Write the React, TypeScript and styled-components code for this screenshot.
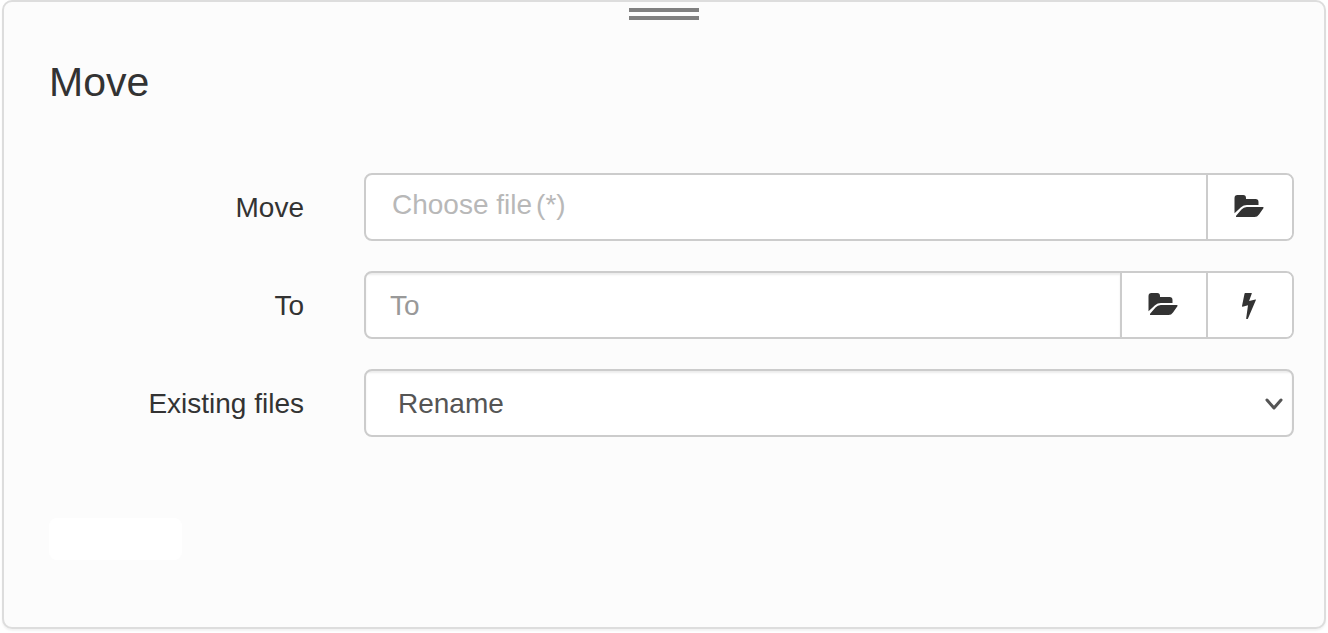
import React from "react";
import styled, { createGlobalStyle } from "styled-components";

const GlobalStyle = createGlobalStyle`
  *, *::before, *::after { box-sizing: border-box; }
  body {
    margin: 0;
    background: #fff;
    color: #333;
    font: 28px/40px "Liberation Sans", Arial, sans-serif;
  }
`;

const Panel = styled.main`
  margin: 0 2px 4px;
  padding-bottom: 67px;
  border: 2px solid #ddd;
  border-radius: 10px;
  background: #fcfcfc;
  box-shadow: 0 2px 2px rgba(0, 0, 0, 0.05);
`;

const DragHandle = styled.div`
  width: 70px;
  height: 12px;
  margin: 6px auto 0;
  border: solid #808080;
  border-width: 4px 0;
`;

const Title = styled.h1`
  margin: 38px 45px 66px;
  font-size: 41px;
  line-height: 49px;
  font-weight: 400;
`;

const Form = styled.form`
  display: flex;
  flex-direction: column;
  gap: 30px;
`;

const Row = styled.div`
  display: grid;
  grid-template-columns: 1fr 3fr;
  align-items: center;
`;

const Label = styled.label`
  padding: 2px 30px 0;
  text-align: right;
`;

const Control = styled.div`
  position: relative;
  display: flex;
  height: 68px;
  margin: 0 30px;
  overflow: hidden;
  border: 2px solid #ccc;
  border-radius: 8px;
  background: #fff;
`;

const FileField = styled.label`
  display: flex;
  flex: 1;
  gap: 4px;
  padding: 10px 26px;
  color: #b8b8b8;
`;

const HiddenFile = styled.input`
  position: absolute;
  opacity: 0;
  width: 1px;
  height: 1px;
`;

const TextInput = styled.input`
  flex: 1;
  min-width: 0;
  padding: 2px 24px 0;
  border: 0;
  outline: 0;
  background: transparent;
  box-shadow: inset 0 2px 2px rgba(0, 0, 0, 0.075);
  color: #555;
  font: inherit;
  &::placeholder { color: #999; opacity: 1; }
`;

const Select = styled.select`
  flex: 1;
  min-width: 0;
  padding: 2px 32px 0;
  border: 0;
  outline: 0;
  appearance: none;
  background: transparent;
  box-shadow: inset 0 2px 2px rgba(0, 0, 0, 0.075);
  color: #555;
  font: inherit;
`;

const Chevron = styled.svg`
  position: absolute;
  right: 8px;
  top: 26px;
  pointer-events: none;
`;

const AddonButton = styled.button`
  display: flex;
  align-items: center;
  justify-content: center;
  width: 86px;
  padding: 0 2px 0 0;
  border: 0;
  border-left: 2px solid #ccc;
  background: #fff;
  color: #333;
  cursor: pointer;
`;

const BlankButton = styled.button`
  display: block;
  width: 133px;
  height: 42px;
  margin: 81px 45px 0;
  border: 0;
  border-radius: 8px;
  background: #fff;
`;

const FolderIcon = () => (
  <svg width="30" height="24" viewBox="0 1 30 24" fill="currentColor" aria-hidden="true">
    <path d="M.5 19.2V4Q.5 1 3.5 1H9.200Q12 1 12 4V5H21.500Q24.500 5 24.500 8V11H13Q9.500 11 7 13.200Z" />
    <path d="M12.800 13H28.800Q30.200 13 29.400 14.200L25 20.500Q23.300 23 20.500 23H3Q1.300 23 2.300 21.600L7.500 15.600Q9.600 13 12.800 13Z" />
  </svg>
);

const BoltIcon = () => (
  <svg width="14" height="28" viewBox="0 -2 14 28" fill="currentColor" aria-hidden="true">
    <path d="M3.300 0H9.400Q10 0 9.800.6L7.100 8 13.400 6.400Q14.200 6.300 13.900 7L6 25.500Q5.700 26 5.200 26H4.700Q4.100 26 4.200 25.300L6 12.200.6 13.700Q-.1 13.800 0 13L2.500.7Q2.600 0 3.300 0Z" />
  </svg>
);

export default function App() {
  return (
    <>
      <GlobalStyle />
      <Panel>
        <DragHandle />
        <Title>Move</Title>
        <Form onSubmit={(event) => event.preventDefault()}>
          <Row>
            <Label htmlFor="source">Move</Label>
            <Control>
              <FileField>
                <span>Choose file</span>
                <span>(*)</span>
                <HiddenFile id="source" type="file" />
              </FileField>
              <AddonButton type="button" aria-label="Browse source">
                <FolderIcon />
              </AddonButton>
            </Control>
          </Row>
          <Row>
            <Label htmlFor="target">To</Label>
            <Control>
              <TextInput id="target" type="text" placeholder="To" />
              <AddonButton type="button" aria-label="Browse destination">
                <FolderIcon />
              </AddonButton>
              <AddonButton type="button" aria-label="Insert variable">
                <BoltIcon />
              </AddonButton>
            </Control>
          </Row>
          <Row>
            <Label htmlFor="existing">Existing files</Label>
            <Control>
              <Select id="existing" defaultValue="rename">
                <option value="rename">Rename</option>
              </Select>
              <Chevron width="20" height="14" viewBox="0 0 20 14" fill="none" stroke="#555" strokeWidth="3" strokeLinecap="round" strokeLinejoin="round" aria-hidden="true">
                <path d="M3 3 10 11 17 3" />
              </Chevron>
            </Control>
          </Row>
        </Form>
        <BlankButton type="button" aria-label="Submit" />
      </Panel>
    </>
  );
}
